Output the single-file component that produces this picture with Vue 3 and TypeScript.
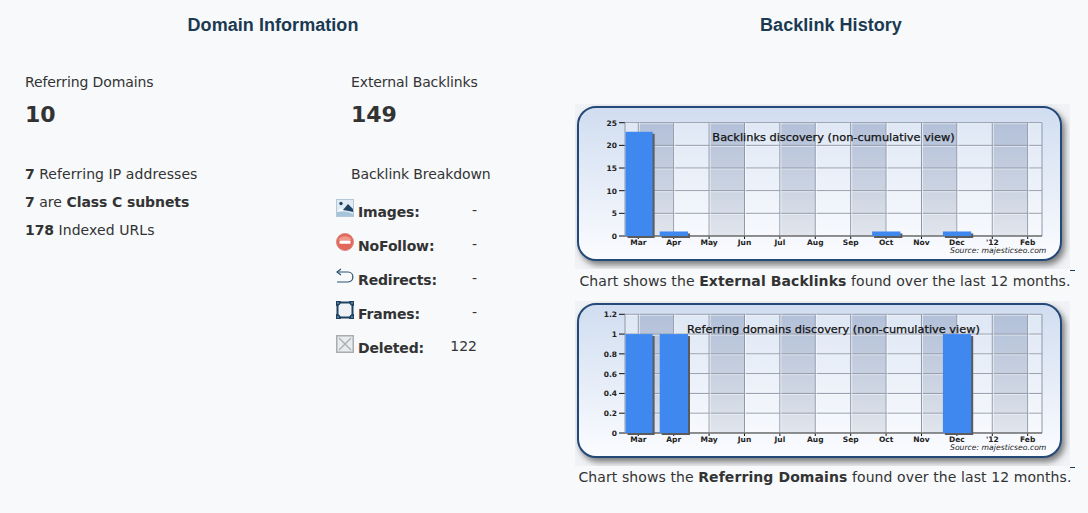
<template>
  <div class="page">
    <section class="domain">
      <h2>Domain Information</h2>
      <div class="columns">
        <div class="col">
          <div class="label">Referring Domains</div>
          <div class="big">10</div>
          <ul class="facts">
            <li><b>7</b> Referring IP addresses</li>
            <li><b>7</b> are <b>Class C subnets</b></li>
            <li><b>178</b> Indexed URLs</li>
          </ul>
        </div>
        <div class="col">
          <div class="label">External Backlinks</div>
          <div class="big">149</div>
          <div class="breakdown-title">Backlink Breakdown</div>
          <div class="breakdown">
            <div class="row">
              <svg class="icon" viewBox="0 0 18 18">
                <rect x="0.5" y="0.5" width="17" height="17" fill="#dfeaf3" stroke="#b5c8d8" />
                <path d="M1 13 L5 9 L8 12 L1 17Z" fill="#fff" />
                <path d="M1 13 Q9 11 17 15 V17 H1Z" fill="#a6c5da" />
                <path d="M7 11 L12 5 L17 10 V13 L13 12Z" fill="#1d4263" />
                <circle cx="5" cy="4.5" r="1.7" fill="#1d4263" />
              </svg>
              <b>Images:</b><span class="val">-</span>
            </div>
            <div class="row">
              <svg class="icon" viewBox="0 0 18 18">
                <circle cx="9" cy="9" r="8.5" fill="#e2665a" stroke="#d9897f" />
                <path d="M2.5 7 A7 6 0 0 1 15.5 7 Z" fill="#f09a8e" />
                <rect x="3.5" y="7.4" width="11" height="3.4" rx="0.6" fill="#fff" />
              </svg>
              <b>NoFollow:</b><span class="val">-</span>
            </div>
            <div class="row">
              <svg class="icon" viewBox="0 0 18 18">
                <path d="M1 5 H12 C18.5 5 18.5 15 12 15 H1" fill="none" stroke="#2b5273" stroke-width="1.2" />
                <path d="M5 2 L1 5 L5 8" fill="none" stroke="#2b5273" stroke-width="1.2" />
              </svg>
              <b>Redirects:</b><span class="val">-</span>
            </div>
            <div class="row">
              <svg class="icon" viewBox="0 0 18 18">
                <rect x="1.5" y="1.5" width="15" height="15" fill="#eef2f6" stroke="#1d4263" stroke-width="2" />
                <path d="M0 0H5Q5 5 0 5ZM18 0H13Q13 5 18 5ZM0 18H5Q5 13 0 13ZM18 18H13Q13 13 18 13Z" fill="#1d4263" />
                <g fill="#9fb6c8">
                  <circle cx="2" cy="2" r="0.8" />
                  <circle cx="16" cy="2" r="0.8" />
                  <circle cx="2" cy="16" r="0.8" />
                  <circle cx="16" cy="16" r="0.8" />
                </g>
              </svg>
              <b>Frames:</b><span class="val">-</span>
            </div>
            <div class="row">
              <svg class="icon" viewBox="0 0 18 18">
                <rect x="0.75" y="0.75" width="16.5" height="16.5" fill="#e9ebee" stroke="#a9acb0" stroke-width="1.5" />
                <path d="M3 3 L15 15 M15 3 L3 15" stroke="#a9acb0" stroke-width="1.3" />
              </svg>
              <b>Deleted:</b><span class="val">122</span>
            </div>
          </div>
        </div>
      </div>
    </section>

    <section class="history">
      <h2>Backlink History</h2>
      <figure v-for="c in charts" :key="c.id" class="chart">
        <svg class="plot" viewBox="0 0 495 165" width="495" height="165">
          <defs>
            <linearGradient :id="`panel-${c.id}`" x1="0" y1="0" x2="0" y2="1">
              <stop offset="0" stop-color="#d0ddf0" />
              <stop offset="1" stop-color="#fbfcff" />
            </linearGradient>
            <linearGradient :id="`band-${c.id}`" x1="0" y1="0" x2="0" y2="1">
              <stop offset="0" stop-color="#8ea0c2" stop-opacity="0.55" />
              <stop offset="1" stop-color="#8c97ab" stop-opacity="0.2" />
            </linearGradient>
            <filter :id="`shadow-${c.id}`" x="-5%" y="-5%" width="110%" height="115%">
              <feDropShadow dx="3" dy="4" stdDeviation="3" flood-color="#555" flood-opacity="0.75" />
            </filter>
          </defs>
          <rect width="495" height="165" fill="#f0f2f5" />
          <rect x="3" y="3" width="483" height="153" rx="18" :fill="`url(#panel-${c.id})`" stroke="#234a78" stroke-width="2" :filter="`url(#shadow-${c.id})`" />

          <rect x="50" :y="c.top" width="417" :height="bottom - c.top" fill="#fff" opacity="0.25" />
          <rect v-for="x in bandXs" :key="x" :x="x" :y="c.top" width="35.4" :height="bottom - c.top" :fill="`url(#band-${c.id})`" />

          <g v-for="t in c.ticks" :key="t.label">
            <line x1="50" x2="467" :y1="t.y" :y2="t.y" stroke="#8f98a8" />
            <line x1="50" x2="467" :y1="t.y + 1" :y2="t.y + 1" stroke="#fff" opacity="0.5" />
            <line x1="44" x2="50" :y1="t.y" :y2="t.y" stroke="#111" />
            <text class="tick" x="42" :y="t.y + 3" text-anchor="end">{{ t.label }}</text>
          </g>
          <g v-for="(m, i) in months" :key="m">
            <line :x1="monthX(i)" :x2="monthX(i)" :y1="c.top" :y2="bottom" stroke="#8f98a8" />
            <line :x1="monthX(i) + 1" :x2="monthX(i) + 1" :y1="c.top" :y2="bottom" stroke="#fff" opacity="0.6" />
            <line :x1="monthX(i)" :x2="monthX(i)" :y1="bottom" :y2="bottom + 3" stroke="#111" />
            <text class="tick" :x="monthX(i)" y="140.5" text-anchor="middle">{{ m }}</text>
          </g>
          <line x1="50" x2="50" :y1="c.top" :y2="bottom" stroke="#8f98a8" />
          <line x1="467" x2="467" :y1="c.top" :y2="bottom" stroke="#8f98a8" />
          <line x1="50" x2="467" :y1="bottom" :y2="bottom" stroke="#777" stroke-width="1.5" />

          <text class="title" x="258.5" :y="c.titleY" text-anchor="middle">{{ c.title }}</text>

          <g v-for="b in c.bars" :key="b.x">
            <rect :x="b.x + 2" :y="b.y + 2" :width="b.w" :height="b.h" fill="#5b5b5b" />
            <rect :x="b.x" :y="b.y" :width="b.w" :height="b.h" fill="#3f88f0" />
          </g>
          <text class="source" x="375" y="148.5">Source: majesticseo.com</text>
        </svg>
        <figcaption>Chart shows the <b>{{ c.name }}</b> found over the last 12 months.</figcaption>
      </figure>
    </section>
  </div>
</template>

<script setup lang="ts">
const months = ['Mar', 'Apr', 'May', 'Jun', 'Jul', 'Aug', 'Sep', 'Oct', 'Nov', 'Dec', "'12", 'Feb']
const bottom = 132
const monthX = (i: number) => 63.3 + 35.4 * i
const bandXs = [0, 2, 4, 6, 8, 10].map(monthX)

const buildChart = (
  id: string,
  name: string,
  title: string,
  titleY: number,
  top: number,
  max: number,
  step: number,
  labels: string[],
  values: number[]
) => {
  const scale = (bottom - top) / max
  const ticks = labels.map((label, i) => ({ label, y: bottom - i * step * scale }))
  const bars = values
    .map((v, i) => {
      const left = Math.max(monthX(i) - 14, 50.5)
      const right = monthX(i) + 14.3
      return { x: left, w: right - left, y: bottom - v * scale, h: v * scale, v }
    })
    .filter((b) => b.v > 0)
  return { id, name, title, titleY, top, ticks, bars }
}

const charts = [
  buildChart('links', 'External Backlinks', 'Backlinks discovery (non-cumulative view)', 37, 18.7, 25, 5,
    ['0', '5', '10', '15', '20', '25'],
    [23, 1, 0, 0, 0, 0, 0, 1, 0, 1, 0, 0]),
  buildChart('domains', 'Referring Domains', 'Referring domains discovery (non-cumulative view)', 31.5, 13.3, 1.2, 0.2,
    ['0', '0.2', '0.4', '0.6', '0.8', '1', '1.2'],
    [1, 1, 0, 0, 0, 0, 0, 0, 0, 1, 0, 0])
]
</script>

<style>
body {
  background: #f7f9fb;
}
</style>

<style scoped>
.page {
  display: flex;
  height: 513px;
  overflow: hidden;
  font-family: 'DejaVu Sans', Verdana, sans-serif;
  font-size: 14px;
  color: #333;
}

h2 {
  margin: 0;
  font-family: 'Liberation Sans', Arial, sans-serif;
  font-size: 18px;
  line-height: 22px;
  font-weight: bold;
  letter-spacing: 0.05px;
  text-align: center;
  color: #1b3a52;
}

.domain {
  width: 546px;
  flex: none;
  padding-top: 14px;
}

.history {
  padding-top: 14px;
  padding-left: 29px;
  width: 513px;
  flex: none;
}

.history h2 {
  width: 512px;
}

.columns {
  display: flex;
  margin-top: 36px;
  padding-left: 25px;
}

.col {
  width: 326px;
  flex: none;
}

.label {
  line-height: 20px;
  letter-spacing: -0.1px;
}

.big {
  margin-top: 10px;
  font-size: 22px;
  font-weight: bold;
  line-height: 26px;
}

.facts {
  list-style: none;
  margin: 32px 0 0;
  padding: 0;
  letter-spacing: 0.08px;
}

.facts li {
  line-height: 28px;
}

.facts b {
  letter-spacing: -0.1px;
}

.breakdown-title {
  margin-top: 36px;
  line-height: 20px;
  letter-spacing: -0.1px;
}

.breakdown {
  margin-top: 15px;
  margin-left: -15px;
  width: 141px;
}

.row {
  display: flex;
  align-items: flex-start;
  height: 34px;
}

.icon {
  width: 18px;
  height: 18px;
  flex: none;
  margin-right: 4px;
}

.row b {
  margin-top: 5px;
  line-height: 17px;
  letter-spacing: -0.15px;
}

.val {
  margin-left: auto;
  margin-top: 3px;
  line-height: 17px;
}

.chart {
  position: relative;
  margin: 0;
  width: 500px;
}

.history h2 + .chart {
  margin-top: 68px;
}

.chart + .chart {
  margin-top: 9px;
}

.chart::after {
  content: '';
  position: absolute;
  left: 495px;
  top: 166px;
  width: 5px;
  height: 1px;
  background: #1b3a52;
}

.plot {
  display: block;
}

figcaption {
  text-align: center;
  line-height: 22px;
  margin-top: 1px;
  letter-spacing: 0.09px;
}

.chart + .chart figcaption {
  margin-top: 0;
}

.tick {
  font-size: 7.5px;
  font-weight: bold;
  fill: #222;
}

.title {
  font-size: 11.35px;
  fill: #111;
  stroke: #111;
  stroke-width: 0.25px;
}

.source {
  font-size: 7.7px;
  font-style: italic;
  fill: #222;
}
</style>
